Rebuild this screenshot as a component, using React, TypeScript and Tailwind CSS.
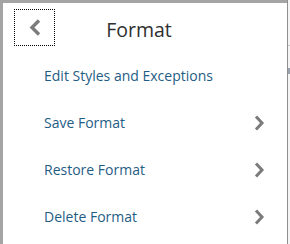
import React from 'react';

const items = [
  { label: 'Edit Styles and Exceptions', arrow: false },
  { label: 'Save Format', arrow: true },
  { label: 'Restore Format', arrow: true },
  { label: 'Delete Format', arrow: true },
];

const ChevronRight: React.FC = () => (
  <svg width="11" height="16" viewBox="0 0 11 16" className="text-[#7b7b7b]">
    <path d="M2 1.5 L8 8 L2 14.5" fill="none" stroke="currentColor" strokeWidth="3" />
  </svg>
);

const ChevronLeft: React.FC = () => (
  <svg width="13" height="17" viewBox="0 0 13 17">
    <path d="M11 1.5 L4 8.5 L11 15.5" fill="none" stroke="currentColor" strokeWidth="3.4" />
  </svg>
);

const App: React.FC = () => {
  return (
    <div className="flex h-[244px] w-[290px] bg-white font-['Open_Sans',sans-serif]">
      <div className="flex flex-1 flex-col border-l-[3px] border-t-[3px] border-[#a4a4a4] bg-white">
        <div className="relative flex h-[49px] items-center justify-center pr-[12px]">
          <button className="absolute left-[11px] top-[6px] flex h-[37px] w-[41px] items-center justify-center border border-dotted border-black text-[#7b7b7b]">
            <ChevronLeft />
          </button>
          <h1 className="mt-[4px] text-[19.5px] text-[#2f2f2f]">Format</h1>
        </div>
        <ul className="flex flex-col">
          {items.map((item) => (
            <li key={item.label} className="flex h-[47px] items-center pl-[41px] pr-[22px] text-[14px] text-[#1f5d85]">
              <span className="flex-1">{item.label}</span>
              {item.arrow && <ChevronRight />}
            </li>
          ))}
        </ul>
      </div>
      <div className="w-px bg-[#8f8f8f]" />
      <div className="flex w-[2px] flex-col bg-[#f4f4f4]">
        <div className="mt-[45px] h-px bg-[#c8c8c8]" />
        <div className="mt-[22px] h-[6px] bg-[#9aa3ad]" />
      </div>
    </div>
  );
};

export default App;
